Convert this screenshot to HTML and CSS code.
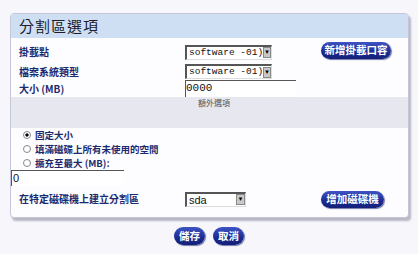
FILE: index.html
```html
<!DOCTYPE html>
<html>
<head>
<meta charset="utf-8">
<link rel="stylesheet" href="styles.css">
</head>
<body>
<div class="panel">
  <div class="header">分割區選項</div>
  <div class="row r1">
    <div class="label">掛載點</div>
    <div class="sel"><span class="seltxt">software -01)</span><span class="arrow">▾</span></div>
    <div class="btn wide">新增掛載口容</div>
  </div>
  <div class="row r2">
    <div class="label">檔案系統類型</div>
    <div class="sel"><span class="seltxt">software -01)</span><span class="arrow">▾</span></div>
  </div>
  <div class="row r3">
    <div class="label">大小 (MB)</div>
    <div class="inp big">0000</div>
  </div>
  <div class="band"><span class="bandtxt">額外選項</span></div>
  <div class="radios">
    <div class="radio"><span class="dot on"></span>固定大小</div>
    <div class="radio"><span class="dot"></span>填滿磁碟上所有未使用的空間</div>
    <div class="radio"><span class="dot"></span>擴充至最大 (MB):</div>
    <div class="inp small">0</div>
  </div>
  <div class="row r4">
    <div class="label">在特定磁碟機上建立分割區</div>
    <div class="sel short"><span class="seltxt sda">sda</span><span class="arrow">▾</span></div>
    <div class="btn mid">增加磁碟機</div>
  </div>
</div>
<div class="footer">
  <div class="btn small">儲存</div>
  <div class="btn small">取消</div>
</div>
</body>
</html>
```
FILE: styles.css
```css
html, body {
  margin: 0;
  padding: 0;
}
body {
  width: 418px;
  height: 254px;
  background: #f7f6fb;
  font-family: "Noto Sans CJK TC", "Noto Sans", sans-serif;
  overflow: hidden;
}
.panel {
  margin: 13px 0 0 10px;
  width: 397px;
  height: 203px;
  background: #fdfdff;
  border: 1px solid #c6c6da;
  border-radius: 4px;
  box-shadow: 2px 3px 2px #b8b8c4;
  overflow: hidden;
  display: flex;
  flex-direction: column;
}
.header {
  height: 24px;
  background: #cfdff3;
  color: #1c1c2c;
  font-size: 15px;
  line-height: 24px;
  padding-left: 8px;
  letter-spacing: 1px;
}
.row {
  display: flex;
  align-items: center;
  padding-left: 8px;
}
.r1 { height: 20px; margin-top: 4px; }
.r2 { height: 15px; margin-top: 2px; }
.r3 { height: 17px; margin-top: 1px; }
.r4 { height: 20px; margin-top: 3px; }
.label {
  width: 166px;
  color: #1b2a6e;
  font-size: 10px;
  font-weight: bold;
  line-height: 14px;
  white-space: nowrap;
}
.sel {
  display: flex;
  align-items: center;
  width: 84px;
  height: 12px;
  background: #fff;
  border-top: 2px solid #555;
  border-left: 2px solid #555;
  border-bottom: 1px solid #ddd;
  border-right: 1px solid #ddd;
  font-family: "Liberation Mono", monospace;
  font-size: 9.5px;
  color: #111;
  overflow: hidden;
}
.seltxt {
  flex: 1;
  padding-left: 2px;
  white-space: nowrap;
  line-height: 12px;
}
.sel.short { width: 58px; }
.sda { font-family: "Liberation Sans", sans-serif; font-size: 11px; }
.arrow {
  width: 9px;
  height: 11px;
  background: #c8c8c8;
  border: 1px solid #888;
  box-sizing: border-box;
  font-size: 7px;
  line-height: 9px;
  text-align: center;
  color: #000;
  font-family: "DejaVu Sans", sans-serif;
}
.inp {
  background: #fff;
  border-top: 1px solid #555;
  border-left: 1px solid #555;
  color: #111;
  font-family: "Liberation Mono", monospace;
  font-size: 11px;
  line-height: 15px;
}
.inp.big { width: 110px; height: 16px; }
.inp.small {
  width: 111px;
  height: 15px;
  font-family: "Liberation Sans", sans-serif;
  padding-left: 1px;
  margin-top: 0;
}
.btn {
  background: linear-gradient(#3f53c6, #1a2b90 60%, #142078);
  color: #fff;
  font-size: 10.5px;
  font-weight: bold;
  text-align: center;
  border-radius: 9px;
  box-shadow: 1px 1px 1px #7078a8;
  line-height: 16px;
  height: 17px;
}
.btn.wide { width: 70px; margin-left: 49px; margin-top: -3px; }
.btn.mid { width: 63px; margin-left: 75px; }
.btn.small { width: 31px; height: 18px; line-height: 18px; }
.band {
  height: 31px;
  background: #e7e7ef;
  position: relative;
}
.bandtxt {
  position: absolute;
  left: 187px;
  top: 0;
  font-size: 8px;
  color: #555;
  line-height: 11px;
}
.radios {
  padding: 0;
  display: flex;
  flex-direction: column;
}
.radio {
  display: flex;
  align-items: center;
  height: 14px;
  padding-left: 12px;
  color: #1b2a6e;
  font-size: 9.5px;
  font-weight: bold;
  line-height: 14px;
  overflow: hidden;
}
.dot {
  width: 8px;
  height: 8px;
  border-radius: 50%;
  border: 1px solid #888;
  background: #fff;
  margin-right: 4px;
  box-sizing: border-box;
  flex: none;
}
.dot.on { background: radial-gradient(#000 35%, #fff 40%); }
.footer {
  display: flex;
  gap: 8px;
  margin: 9px 0 0 174px;
}
```
